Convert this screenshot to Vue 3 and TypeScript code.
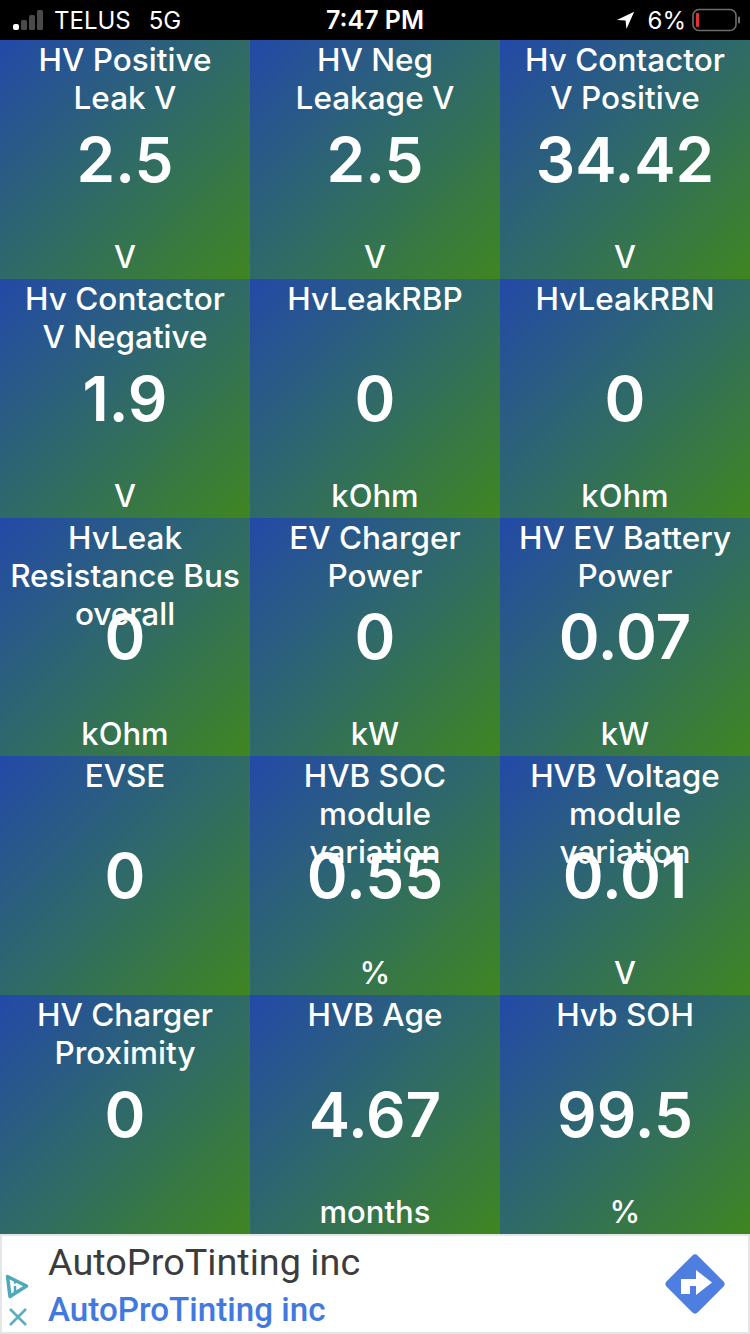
<template>
  <div class="screen">
    <header class="status">
      <div class="status-left">
        <svg class="signal" width="32" height="24" viewBox="0 0 32 24">
          <rect x="1" y="16" width="6" height="6" rx="2" fill="#fff" />
          <rect x="9" y="12" width="6" height="10" rx="1.5" fill="#4a4a4a" />
          <rect x="17" y="7" width="6" height="15" rx="1.5" fill="#4a4a4a" />
          <rect x="25" y="2" width="6" height="20" rx="1.5" fill="#4a4a4a" />
        </svg>
        <span class="carrier">TELUS</span>
        <span class="carrier net">5G</span>
      </div>
      <div class="clock">7:47 PM</div>
      <div class="status-right">
        <svg class="arrow" width="20" height="20" viewBox="0 0 22 22"><path d="M20 2 L1 11 L10.5 11.5 L11.5 21 Z" fill="#fff" /></svg>
        <span class="carrier">6%</span>
        <svg class="battery" width="48" height="24" viewBox="0 0 48 24">
          <rect x="1" y="1.5" width="43" height="21" rx="6" fill="none" stroke="#6d6d6d" stroke-width="1.6" />
          <rect x="4" y="5" width="3" height="14" rx="1" fill="#e0313a" />
          <rect x="46" y="8.500" width="2" height="7" rx="1" fill="#6d6d6d" />
        </svg>
      </div>
    </header>

    <main class="tiles">
      <section v-for="t in tiles" :key="t.title" class="tile">
        <div class="title">
          <div v-for="line in t.title.split('|')" :key="line">{{ line }}</div>
        </div>
        <div class="value">{{ t.value }}</div>
        <div class="unit">{{ t.unit }}</div>
      </section>
    </main>

    <footer class="ad">
      <div class="ad-marks">
        <svg width="24" height="25" viewBox="0 0 24 25" fill="none" stroke="#4fa9ba" stroke-width="3.500">
          <path d="M2.500 2.500 L21.500 12 L5 22.500 Z" stroke-linejoin="round" />
          <path d="M10 12 V18 M10 7.500 V9.500" stroke-width="2.500" />
        </svg>
        <svg class="ad-close" width="20" height="18" viewBox="0 0 20 18" fill="none" stroke="#5db0ba" stroke-width="2.600">
          <path d="M2 1 L18 17 M18 1 L2 17" />
        </svg>
      </div>
      <div class="ad-text">
        <div class="ad-head">AutoProTinting inc</div>
        <div class="ad-link">AutoProTinting inc</div>
      </div>
      <svg class="ad-go" width="64" height="64" viewBox="0 0 64 64">
        <rect x="10" y="10" width="44" height="44" rx="4" transform="rotate(45 32 32)" fill="#4e7ee0" />
        <path d="M18 42 V27 H33 V18 L49 30.500 L33 43 V34 H27 V42 Z" fill="#fff" />
      </svg>
    </footer>
  </div>
</template>

<script setup lang="ts">
interface Tile {
  title: string
  value: string
  unit: string
}

// '|' marks the line breaks of the titles
const tiles: Tile[] = [
  { title: 'HV Positive|Leak V', value: '2.5', unit: 'V' },
  { title: 'HV Neg|Leakage V', value: '2.5', unit: 'V' },
  { title: 'Hv Contactor|V Positive', value: '34.42', unit: 'V' },
  { title: 'Hv Contactor|V Negative', value: '1.9', unit: 'V' },
  { title: 'HvLeakRBP', value: '0', unit: 'kOhm' },
  { title: 'HvLeakRBN', value: '0', unit: 'kOhm' },
  { title: 'HvLeak|Resistance Bus|overall', value: '0', unit: 'kOhm' },
  { title: 'EV Charger|Power', value: '0', unit: 'kW' },
  { title: 'HV EV Battery|Power', value: '0.07', unit: 'kW' },
  { title: 'EVSE', value: '0', unit: '' },
  { title: 'HVB SOC|module|variation', value: '0.55', unit: '%' },
  { title: 'HVB Voltage|module|variation', value: '0.01', unit: 'V' },
  { title: 'HV Charger|Proximity', value: '0', unit: '' },
  { title: 'HVB Age', value: '4.67', unit: 'months' },
  { title: 'Hvb SOH', value: '99.5', unit: '%' },
]
</script>

<style>
body {
  background: #fff;
}
</style>

<style scoped>
.screen {
  width: 750px;
  height: 1334px;
  display: flex;
  flex-direction: column;
  overflow: hidden;
  font-family: Inter, "Liberation Sans", sans-serif;
}

.status {
  height: 40px;
  flex: none;
  background: #000;
  color: #fff;
  display: grid;
  grid-template-columns: 1fr auto 1fr;
  align-items: center;
  font-size: 24px;
  padding: 0 12px 0 12px;
  box-sizing: border-box;
}

.status-left {
  display: flex;
  align-items: center;
  gap: 10px;
}

.net {
  margin-left: 8px;
}

.clock {
  font-size: 25px;
  font-weight: 600;
}

.status-right {
  display: flex;
  align-items: center;
  justify-content: flex-end;
  gap: 6px;
  margin-right: -2px;
}

.arrow {
  margin-right: 6px;
}

.tiles {
  height: 1194px;
  flex: none;
  display: grid;
  grid-template-columns: repeat(3, 250px);
  grid-template-rows: repeat(5, 1fr);
}

.tile {
  display: grid;
  justify-items: center;
  text-align: center;
  color: #fff;
  background: linear-gradient(135deg, #2349a8 0%, #2f6a68 50%, #3f8620 100%);
  overflow: hidden;
}

.title,
.value,
.unit {
  grid-area: 1 / 1;
}

.title {
  align-self: start;
  font-size: 31.500px;
  font-weight: 500;
  line-height: 38px;
  padding-top: 1px;
  white-space: nowrap;
}

.value {
  align-self: center;
  font-size: 62px;
  font-weight: 600;
  line-height: 70px;
  margin-bottom: -1px;
}

.unit {
  align-self: end;
  font-size: 31px;
  font-weight: 500;
  line-height: 38px;
  margin-bottom: 3px;
}

.ad {
  flex: 1;
  display: flex;
  align-items: stretch;
  background: #fff;
  border: 2px solid #e4e6e6;
  box-sizing: border-box;
}

.ad-marks {
  width: 44px;
  flex: none;
  display: flex;
  flex-direction: column;
  justify-content: flex-end;
  align-items: flex-start;
  gap: 9px;
  padding: 0 0 6px 3px;
  box-sizing: border-box;
}

.ad-close {
  margin-left: 3px;
}

.ad-text {
  flex: 1;
  padding-left: 2px;
}

.ad-head {
  font-family: Roboto, "Open Sans", sans-serif;
  font-size: 37.800px;
  line-height: 52px;
  color: #3c3c3c;
}

.ad-link {
  font-family: Roboto, "Open Sans", sans-serif;
  font-size: 33.200px;
  font-weight: 500;
  line-height: 44px;
  color: #4179df;
}

.ad-go {
  align-self: center;
  margin-right: 21px;
}
</style>
